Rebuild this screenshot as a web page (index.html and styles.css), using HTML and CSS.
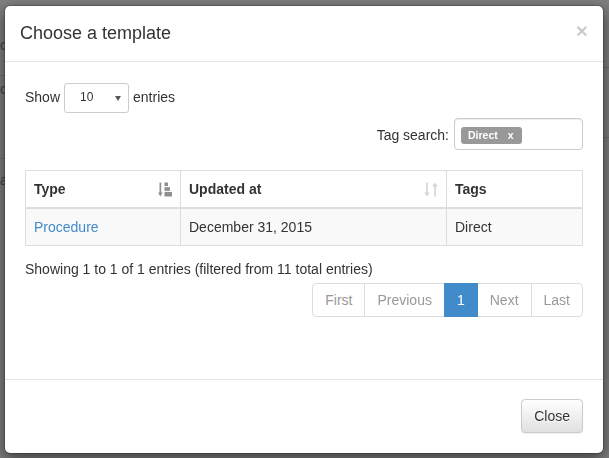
FILE: index.html
```html
<!DOCTYPE html>
<html>
<head>
<meta charset="utf-8">
<title>Choose a template</title>
<link rel="stylesheet" href="styles.css">
</head>
<body>
<div class="page">
  <div class="page-col page-left">
    <div class="page-row pl1"><span class="page-text">c</span></div>
    <div class="page-row pl2"><span class="page-text">c</span></div>
    <div class="page-row pl3"><span class="page-text">a</span></div>
  </div>
  <div class="page-col page-right">
    <div class="page-row pr1"></div>
    <div class="page-row pr2"></div>
    <div class="page-row pr3"></div>
  </div>
</div>
<div class="backdrop"></div>
<div class="modal">
  <div class="modal-header">
    <h4 class="modal-title">Choose a template</h4>
    <button class="close" type="button">×</button>
  </div>
  <div class="modal-body">
    <div class="length">
      <span>Show</span>
      <span class="select"><span class="select-val">10</span><svg class="caret" width="6" height="5" viewBox="0 0 6 5"><path d="M0 0H6L3 5Z" fill="#555"/></svg></span>
      <span>entries</span>
    </div>
    <div class="tag-filter">
      <label class="tag-label">Tag search:</label>
      <div class="tags-input"><span class="tag">Direct<span class="tag-x">x</span></span></div>
    </div>
    <table class="grid">
      <colgroup><col class="c1"><col class="c2"><col class="c3"></colgroup>
      <thead>
        <tr>
          <th><div class="th-in"><span>Type</span>
            <svg class="sort-icon" width="14" height="15" viewBox="0 0 14 15">
              <g fill="#8f8f8f">
                <rect x="1.5" y="0.5" width="1.7" height="11"/>
                <path d="M0 10.5H4.7L2.35 14.5Z"/>
                <rect x="6.5" y="0.5" width="3.5" height="3.6"/>
                <rect x="6.5" y="5.2" width="5.5" height="3.6"/>
                <rect x="6.5" y="9.9" width="7.5" height="4.6"/>
              </g>
            </svg></div></th>
          <th><div class="th-in"><span>Updated at</span>
            <svg class="sort-icon" width="14" height="15" viewBox="0 0 14 15">
              <g fill="#d6d6d6">
                <rect x="2.2" y="0.5" width="1.7" height="10.5"/>
                <path d="M0.3 10.5H5.8L3.05 14.5Z"/>
                <rect x="10.2" y="4" width="1.7" height="10.5"/>
                <path d="M8.2 4.5H13.7L10.95 0.5Z"/>
              </g>
            </svg></div></th>
          <th><div class="th-in"><span>Tags</span></div></th>
        </tr>
      </thead>
      <tbody>
        <tr class="odd">
          <td><a href="#" class="link">Procedure</a></td>
          <td>December 31, 2015</td>
          <td>Direct</td>
        </tr>
      </tbody>
    </table>
    <div class="info">Showing 1 to 1 of 1 entries (filtered from 11 total entries)</div>
    <div class="pager">
      <ul class="pagination">
        <li class="disabled"><a href="#">First</a></li>
        <li class="disabled"><a href="#">Previous</a></li>
        <li class="active"><a href="#">1</a></li>
        <li class="disabled"><a href="#">Next</a></li>
        <li class="disabled"><a href="#">Last</a></li>
      </ul>
    </div>
  </div>
  <div class="modal-footer">
    <button class="btn" type="button">Close</button>
  </div>
</div>
</body>
</html>
```

FILE: styles.css
```css
html, body {
  margin: 0;
  padding: 0;
  height: 458px;
  overflow: hidden;
}
body {
  font-family: "Liberation Sans", Arial, sans-serif;
  font-size: 14px;
  line-height: 1.42857;
  color: #333;
  background: #fff;
}

/* underlying page */
.page {
  display: flex;
  justify-content: space-between;
  height: 458px;
}
.page-col {
  width: 40px;
  display: flex;
  flex-direction: column;
}
.page-row {
  border-bottom: 1px solid #ddd;
  box-sizing: border-box;
  color: #888;
  font-size: 14px;
}
.page-text {
  display: block;
  margin-left: 0;
}
.pl1 { height: 76px; padding-top: 36px; }
.pl2 { height: 83px; padding-top: 4px; }
.pl3 { height: 60px; padding-top: 12px; border-bottom: 0; }
.pr1 { height: 68px; }
.pr2 { height: 70px; }
.pr3 { height: 60px; border-bottom: 0; }

.backdrop {
  position: fixed;
  inset: 0;
  background: rgba(0, 0, 0, 0.5);
}

/* modal */
.modal {
  position: absolute;
  left: 4px;
  top: 5px;
  width: 600px;
  box-sizing: border-box;
  background: #fff;
  background-clip: padding-box;
  border: 1px solid rgba(0, 0, 0, 0.2);
  border-radius: 6px;
  box-shadow: 0 5px 15px rgba(0, 0, 0, 0.5);
}
.modal-header {
  display: flex;
  justify-content: space-between;
  align-items: flex-start;
  padding: 15px;
  border-bottom: 1px solid #e5e5e5;
}
.modal-title {
  margin: 0;
  font-size: 18px;
  font-weight: normal;
  line-height: 25px;
}
.close {
  margin-top: -1px;
  padding: 0;
  border: 0;
  background: transparent;
  font-family: "Liberation Sans", Arial, sans-serif;
  font-size: 21px;
  font-weight: bold;
  line-height: 1;
  color: #000;
  opacity: 0.2;
  text-shadow: 0 1px 0 #fff;
  cursor: pointer;
}

.modal-body {
  padding: 21px 20px 60px;
}
.length {
  display: flex;
  align-items: center;
  gap: 4px;
  height: 30px;
}
.select {
  display: flex;
  align-items: center;
  justify-content: space-between;
  box-sizing: border-box;
  width: 65px;
  height: 30px;
  padding: 0 7px 0 15px;
  border: 1px solid #ccc;
  border-radius: 3px;
  font-size: 12px;
  color: #555;
  background: #fff;
}
.select-val {
  color: #333;
}
.caret {
  display: block;
}

.tag-filter {
  display: flex;
  justify-content: flex-end;
  align-items: center;
  gap: 5px;
  margin-top: 5px;
}
.tag-label {
  font-weight: normal;
  padding-top: 4px;
}
.tags-input {
  display: flex;
  align-items: flex-start;
  box-sizing: border-box;
  width: 129px;
  height: 32px;
  padding: 8px 6px;
  border: 1px solid #ccc;
  border-radius: 4px;
  box-shadow: inset 0 1px 1px rgba(0, 0, 0, 0.075);
}
.tag {
  display: inline-flex;
  align-items: center;
  padding: 3px 8px 3px 7px;
  font-size: 10.5px;
  font-weight: bold;
  line-height: 11px;
  color: #fff;
  background: #999;
  border-radius: 3px;
}
.tag-x {
  margin-left: 10px;
}

/* table */
.grid {
  width: 100%;
  margin-top: 20px;
  margin-bottom: 6px;
  border-collapse: collapse;
  border: 1px solid #ddd;
}
.c1 { width: 155px; }
.c2 { width: 266px; }
.grid th,
.grid td {
  padding: 8px;
  line-height: 20px;
  text-align: left;
  border: 1px solid #ddd;
}
.grid th {
  font-weight: bold;
  border-bottom: 2px solid #ddd;
}
.th-in {
  display: flex;
  justify-content: space-between;
  align-items: center;
}
.sort-icon {
  display: block;
  margin-top: 1px;
}
.grid tr.odd td {
  background: #f9f9f9;
}
.link {
  color: #428bca;
  text-decoration: none;
}

.info {
  padding-top: 8px;
}
.pager {
  display: flex;
  justify-content: flex-end;
}
.pagination {
  display: flex;
  margin: 3px 0 2px;
  padding: 0;
  list-style: none;
}
.pagination li a {
  display: block;
  position: relative;
  padding: 6px 12px;
  line-height: 20px;
  margin-left: -1px;
  color: #999;
  background: #fff;
  border: 1px solid #ddd;
  text-decoration: none;
}
.pagination li:first-child a {
  margin-left: 0;
  border-radius: 4px 0 0 4px;
}
.pagination li:last-child a {
  border-radius: 0 4px 4px 0;
}
.pagination li.active a {
  z-index: 2;
  color: #fff;
  background: #428bca;
  border-color: #428bca;
}

.modal-footer {
  display: flex;
  justify-content: flex-end;
  padding: 19px 20px 20px;
  border-top: 1px solid #e5e5e5;
}
.btn {
  padding: 6px 12px;
  font-family: "Liberation Sans", Arial, sans-serif;
  font-size: 14px;
  line-height: 20px;
  color: #333;
  border: 1px solid #ccc;
  border-radius: 4px;
  background: linear-gradient(to bottom, #fff 0, #e0e0e0 100%);
  text-shadow: 0 1px 0 #fff;
  box-shadow: inset 0 1px 0 rgba(255, 255, 255, 0.15), 0 1px 1px rgba(0, 0, 0, 0.075);
  cursor: pointer;
}
```
